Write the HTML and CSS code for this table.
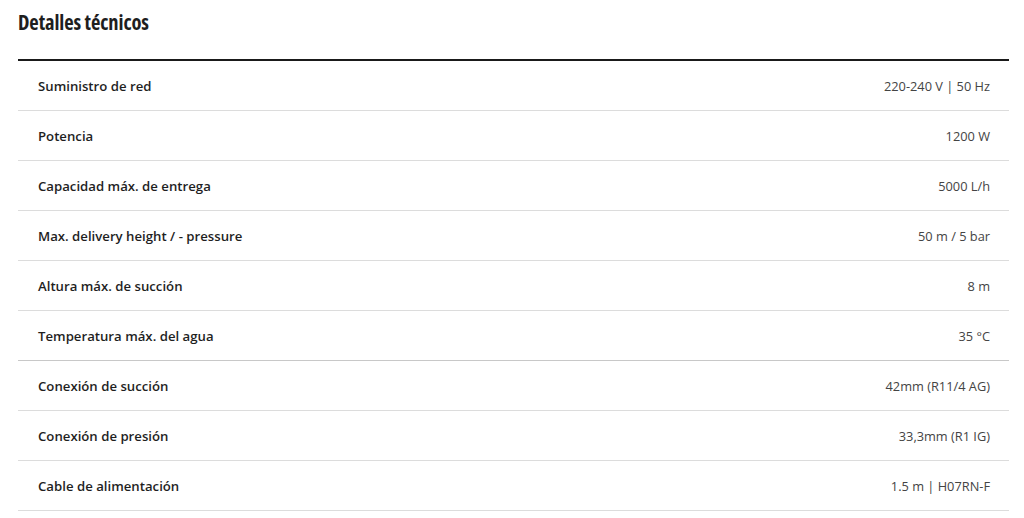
FILE: index.html
```html
<!DOCTYPE html>
<html lang="es">
<head>
<meta charset="utf-8">
<link rel="stylesheet" href="styles.css">
</head>
<body>
<section class="specs">
  <h2 class="specs-title">Detalles técnicos</h2>
  <div class="specs-table">
    <div class="row"><span class="label">Suministro de red</span><span class="value">220-240 V | 50 Hz</span></div>
    <div class="row"><span class="label">Potencia</span><span class="value">1200 W</span></div>
    <div class="row"><span class="label">Capacidad máx. de entrega</span><span class="value">5000 L/h</span></div>
    <div class="row"><span class="label">Max. delivery height / - pressure</span><span class="value">50 m / 5 bar</span></div>
    <div class="row"><span class="label">Altura máx. de succión</span><span class="value">8 m</span></div>
    <div class="row row-group-end"><span class="label">Temperatura máx. del agua</span><span class="value">35 °C</span></div>
    <div class="row"><span class="label">Conexión de succión</span><span class="value">42mm (R11/4 AG)</span></div>
    <div class="row"><span class="label">Conexión de presión</span><span class="value">33,3mm (R1 IG)</span></div>
    <div class="row"><span class="label">Cable de alimentación</span><span class="value">1.5 m | H07RN-F</span></div>
  </div>
</section>
</body>
</html>
```

FILE: styles.css
```css
html, body {
  margin: 0;
  padding: 0;
  background: #ffffff;
}
body {
  font-family: "Open Sans", "Liberation Sans", sans-serif;
  color: #222;
}
.specs {
  padding: 9px 15px 0 18px;
}
.specs-title {
  margin: 0 0 24px 0;
  font-size: 20.5px;
  line-height: 26px;
  font-weight: 700;
  font-stretch: 75%;
  letter-spacing: -0.1px;
  color: #1e1e1e;
}
.specs-table {
  border-top: 2px solid #1a1a1a;
}
.row {
  display: flex;
  justify-content: space-between;
  align-items: center;
  height: 49px;
  padding: 0 19px 0 20px;
  border-bottom: 1px solid #dcdcdc;
  font-size: 13px;
}
.row-group-end {
  border-bottom-color: #c8c8c8;
}
.label {
  font-weight: 600;
  font-size: 13.2px;
  color: #1f1f1f;
}
.value {
  font-weight: 400;
  font-size: 12.8px;
  color: #444;
}
```
